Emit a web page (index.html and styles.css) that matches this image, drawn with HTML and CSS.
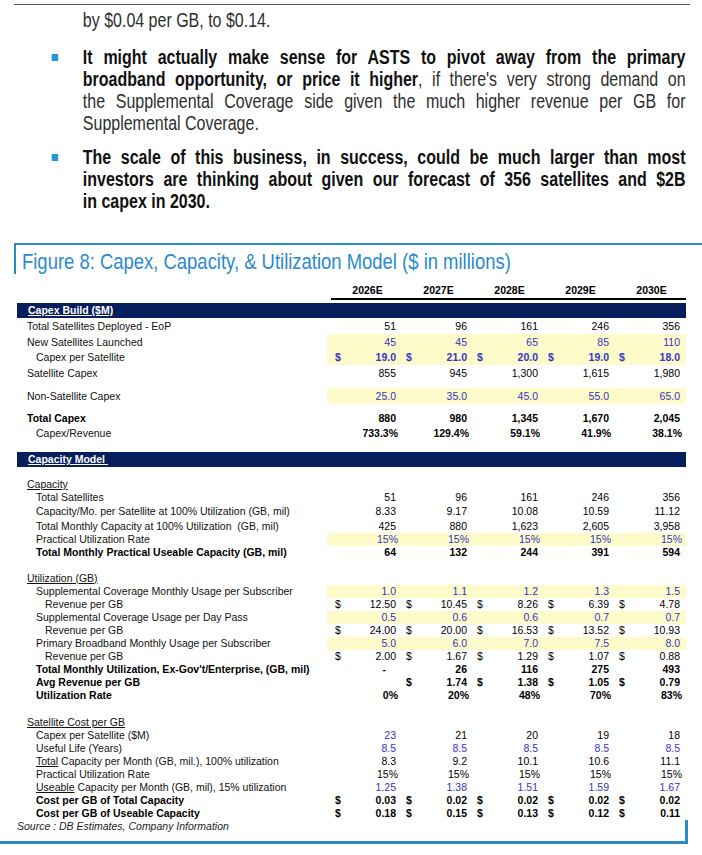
FILE: index.html
```html
<!DOCTYPE html>
<html lang="en">
<head>
<meta charset="utf-8">
<title>Figure 8: Capex, Capacity, &amp; Utilization Model</title>
<link rel="stylesheet" href="styles.css">
</head>
<body>
<div class="page">
  <div class="top-rule"></div>
  <div class="prose">
    <p class="lead">by $0.04 per GB, to $0.14.</p>
    <ul class="bullets">
      <li>
        <span class="mark"></span>
        <div>
          <span class="ln"><b>It might actually make sense for ASTS to pivot away from the primary</b></span>
          <span class="ln"><b>broadband opportunity, or price it higher</b>, if there's very strong demand on</span>
          <span class="ln">the Supplemental Coverage side given the much higher revenue per GB for</span>
          <span class="ln end">Supplemental Coverage.</span>
        </div>
      </li>
      <li>
        <span class="mark"></span>
        <div>
          <span class="ln"><b>The scale of this business, in success, could be much larger than most</b></span>
          <span class="ln"><b>investors are thinking about given our forecast of 356 satellites and $2B</b></span>
          <span class="ln end"><b>in capex in 2030.</b></span>
        </div>
      </li>
    </ul>
  </div>

  <div class="figure">
    <div class="fig-head">
      <h2 class="fig-title">Figure 8: Capex, Capacity, &amp; Utilization Model ($ in millions)</h2>
    </div>
    <div class="years"><span>2026E</span><span>2027E</span><span>2028E</span><span>2029E</span><span>2030E</span></div>

    <div class="tbl">
      <div class="bar"><u>Capex Build ($M)</u></div>

      <div class="r r16"><span class="lab">Total Satellites Deployed - EoP</span>
        <span class="vals"><span class="c">51</span><span class="c">96</span><span class="c">161</span><span class="c">246</span><span class="c">356</span></span></div>
      <div class="r r16 hl"><span class="lab">New Satellites Launched</span>
        <span class="vals blue"><span class="c">45</span><span class="c">45</span><span class="c">65</span><span class="c">85</span><span class="c">110</span></span></div>
      <div class="r r15 hl"><span class="lab in1">Capex per Satellite</span>
        <span class="vals blue b"><span class="c"><span class="d">$</span>19.0</span><span class="c"><span class="d">$</span>21.0</span><span class="c"><span class="d">$</span>20.0</span><span class="c"><span class="d">$</span>19.0</span><span class="c"><span class="d">$</span>18.0</span></span></div>
      <div class="r r16"><span class="lab">Satellite Capex</span>
        <span class="vals"><span class="c">855</span><span class="c">945</span><span class="c">1,300</span><span class="c">1,615</span><span class="c">1,980</span></span></div>
      <div class="r r16 hl gap-s"><span class="lab">Non-Satellite Capex</span>
        <span class="vals blue"><span class="c">25.0</span><span class="c">35.0</span><span class="c">45.0</span><span class="c">55.0</span><span class="c">65.0</span></span></div>
      <div class="r r15 b gap-s"><span class="lab">Total Capex</span>
        <span class="vals"><span class="c">880</span><span class="c">980</span><span class="c">1,345</span><span class="c">1,670</span><span class="c">2,045</span></span></div>
      <div class="r r14"><span class="lab in1">Capex/Revenue</span>
        <span class="vals b"><span class="c p">733.3%</span><span class="c p">129.4%</span><span class="c p">59.1%</span><span class="c p">41.9%</span><span class="c p">38.1%</span></span></div>

      <div class="bar gap-bar"><u>Capacity Model&nbsp;</u></div>

      <div class="r r14 gap-head"><span class="lab"><u>Capacity</u></span><span class="vals"></span></div>
      <div class="r"><span class="lab in1">Total Satellites</span>
        <span class="vals"><span class="c">51</span><span class="c">96</span><span class="c">161</span><span class="c">246</span><span class="c">356</span></span></div>
      <div class="r r14"><span class="lab in1">Capacity/Mo. per Satellite at 100% Utilization (GB, mil)</span>
        <span class="vals"><span class="c">8.33</span><span class="c">9.17</span><span class="c">10.08</span><span class="c">10.59</span><span class="c">11.12</span></span></div>
      <div class="r gap-xs"><span class="lab in1">Total Monthly Capacity at 100% Utilization&nbsp; (GB, mil)</span>
        <span class="vals"><span class="c">425</span><span class="c">880</span><span class="c">1,623</span><span class="c">2,605</span><span class="c">3,958</span></span></div>
      <div class="r hl"><span class="lab in1">Practical Utilization Rate</span>
        <span class="vals blue"><span class="c p">15%</span><span class="c p">15%</span><span class="c p">15%</span><span class="c p">15%</span><span class="c p">15%</span></span></div>
      <div class="r b"><span class="lab in1">Total Monthly Practical Useable Capacity (GB, mil)</span>
        <span class="vals"><span class="c">64</span><span class="c">132</span><span class="c">244</span><span class="c">391</span><span class="c">594</span></span></div>

      <div class="r gap-m"><span class="lab"><u>Utilization (GB)</u></span><span class="vals"></span></div>
      <div class="r hl"><span class="lab in1">Supplemental Coverage Monthly Usage per Subscriber</span>
        <span class="vals blue"><span class="c">1.0</span><span class="c">1.1</span><span class="c">1.2</span><span class="c">1.3</span><span class="c">1.5</span></span></div>
      <div class="r"><span class="lab in2">Revenue per GB</span>
        <span class="vals"><span class="c"><span class="d">$</span>12.50</span><span class="c"><span class="d">$</span>10.45</span><span class="c"><span class="d">$</span>8.26</span><span class="c"><span class="d">$</span>6.39</span><span class="c"><span class="d">$</span>4.78</span></span></div>
      <div class="r hl"><span class="lab in1">Supplemental Coverage Usage per Day Pass</span>
        <span class="vals blue"><span class="c">0.5</span><span class="c">0.6</span><span class="c">0.6</span><span class="c">0.7</span><span class="c">0.7</span></span></div>
      <div class="r"><span class="lab in2">Revenue per GB</span>
        <span class="vals"><span class="c"><span class="d">$</span>24.00</span><span class="c"><span class="d">$</span>20.00</span><span class="c"><span class="d">$</span>16.53</span><span class="c"><span class="d">$</span>13.52</span><span class="c"><span class="d">$</span>10.93</span></span></div>
      <div class="r hl"><span class="lab in1">Primary Broadband Monthly Usage per Subscriber</span>
        <span class="vals blue"><span class="c">5.0</span><span class="c">6.0</span><span class="c">7.0</span><span class="c">7.5</span><span class="c">8.0</span></span></div>
      <div class="r"><span class="lab in2">Revenue per GB</span>
        <span class="vals"><span class="c"><span class="d">$</span>2.00</span><span class="c"><span class="d">$</span>1.67</span><span class="c"><span class="d">$</span>1.29</span><span class="c"><span class="d">$</span>1.07</span><span class="c"><span class="d">$</span>0.88</span></span></div>
      <div class="r b"><span class="lab in1">Total Monthly Utilization, Ex-Gov't/Enterprise, (GB, mil)</span>
        <span class="vals"><span class="c dash">-</span><span class="c">26</span><span class="c">116</span><span class="c">275</span><span class="c">493</span></span></div>
      <div class="r b"><span class="lab in1">Avg Revenue per GB</span>
        <span class="vals"><span class="c"></span><span class="c"><span class="d">$</span>1.74</span><span class="c"><span class="d">$</span>1.38</span><span class="c"><span class="d">$</span>1.05</span><span class="c"><span class="d">$</span>0.79</span></span></div>
      <div class="r b"><span class="lab in1">Utilization Rate</span>
        <span class="vals"><span class="c p">0%</span><span class="c p">20%</span><span class="c p">48%</span><span class="c p">70%</span><span class="c p">83%</span></span></div>

      <div class="r gap-l"><span class="lab"><u>Satellite Cost per GB</u></span><span class="vals"></span></div>
      <div class="r"><span class="lab in1">Capex per Satellite ($M)</span>
        <span class="vals"><span class="c blue">23</span><span class="c">21</span><span class="c">20</span><span class="c">19</span><span class="c">18</span></span></div>
      <div class="r"><span class="lab in1">Useful Life (Years)</span>
        <span class="vals blue"><span class="c">8.5</span><span class="c">8.5</span><span class="c">8.5</span><span class="c">8.5</span><span class="c">8.5</span></span></div>
      <div class="r"><span class="lab in1"><u>Total</u> Capacity per Month (GB, mil.), 100% utilization</span>
        <span class="vals"><span class="c">8.3</span><span class="c">9.2</span><span class="c">10.1</span><span class="c">10.6</span><span class="c">11.1</span></span></div>
      <div class="r"><span class="lab in1">Practical Utilization Rate</span>
        <span class="vals"><span class="c p">15%</span><span class="c p">15%</span><span class="c p">15%</span><span class="c p">15%</span><span class="c p">15%</span></span></div>
      <div class="r"><span class="lab in1"><u>Useable</u> Capacity per Month (GB, mil), 15% utilization</span>
        <span class="vals blue"><span class="c">1.25</span><span class="c">1.38</span><span class="c">1.51</span><span class="c">1.59</span><span class="c">1.67</span></span></div>
      <div class="r b"><span class="lab in1">Cost per GB of Total Capacity</span>
        <span class="vals"><span class="c"><span class="d">$</span>0.03</span><span class="c"><span class="d">$</span>0.02</span><span class="c"><span class="d">$</span>0.02</span><span class="c"><span class="d">$</span>0.02</span><span class="c"><span class="d">$</span>0.02</span></span></div>
      <div class="r b"><span class="lab in1">Cost per GB of Useable Capacity</span>
        <span class="vals"><span class="c"><span class="d">$</span>0.18</span><span class="c"><span class="d">$</span>0.15</span><span class="c"><span class="d">$</span>0.13</span><span class="c"><span class="d">$</span>0.12</span><span class="c"><span class="d">$</span>0.11</span></span></div>
    </div>

    <div class="fig-foot">Source : DB Estimates, Company Information</div>
  </div>
</div>
</body>
</html>
```

FILE: styles.css
```css
* { box-sizing: border-box; }

body {
  margin: 0;
  background: #ffffff;
  font-family: "Liberation Sans", Arial, sans-serif;
  color: #000;
}

.page { width: 702px; }

.top-rule {
  margin: 4px 12px 0 14px;
  border-top: 1px solid #555;
}

/* ---------- prose: condensed face emulated by a horizontal squeeze ---------- */
.prose {
  width: 856px;                 /* 702 / 0.82 */
  transform: scaleX(0.82);
  transform-origin: 0 0;
  font-family: "Liberation Sans", Arial, sans-serif;
  font-size: 19.5px;
  line-height: 22px;
  color: #2e2e2e;
}

.lead {
  margin: 4px 0 0;
  padding-left: 101px;          /* 83px after squeeze */
}

.bullets {
  list-style: none;
  margin: 15px 0 0;
  padding: 0 20px 0 63px;       /* 52px .. 686px after squeeze */
}

.bullets li {
  display: grid;
  grid-template-columns: 38px 1fr;
}

.bullets li + li { margin-top: 12px; }

.bullets b { color: #111; }

.mark {
  width: 7.5px;
  height: 7px;
  margin-top: 8px;
  background: #2497d6;
}

.ln {
  display: block;
  white-space: nowrap;
  text-align: justify;
  text-align-last: justify;
}

.ln.end { text-align-last: left; }

/* ---------- figure ---------- */
.figure { margin-top: 31px; }

.fig-head {
  margin-left: 14px;
  border-top: 2px solid #2b8cc4;
  border-left: 2px solid #2b8cc4;
  padding: 5px 0 0 6px;
}

.fig-title {
  margin: 0;
  white-space: nowrap;
  transform: scaleX(0.82);
  transform-origin: 0 50%;
  font-weight: normal;
  font-size: 22.5px;
  line-height: 24px;
  color: #2a8ad0;
}

.years {
  display: grid;
  grid-template-columns: 67px repeat(4, 71px) 4px;
  width: 355px;
  margin: 9px 0 0 331px;
  border-bottom: 2px solid #000;
  font-size: 10.5px;
  font-weight: bold;
  line-height: 15px;
}

.years span {
  text-align: center;
  padding-left: 10px;
}

.years span:first-child { padding-left: 6px; }

.tbl {
  width: 669px;
  margin: 3px 0 0 17px;
  font-size: 10.5px;
}

.bar {
  height: 15px;
  line-height: 15px;
  padding-left: 11px;
  background: #061f5c;
  color: #fff;
  font-weight: bold;
}

.r {
  display: grid;
  grid-template-columns: 310px 1fr;
  height: 13px;
  line-height: 13px;
}

.r16 { height: 16px; line-height: 16px; }
.r15 { height: 15px; line-height: 15px; }
.r14 { height: 14px; line-height: 14px; }

.gap-xs { margin-top: 2px; }
.gap-s { margin-top: 7px; }
.gap-head { margin-top: 10px; }
.gap-bar { margin-top: 12px; }
.gap-m { margin-top: 13px; }
.gap-l { margin-top: 14px; }

.lab {
  padding-left: 10px;
  white-space: nowrap;
  color: #111;
}

.b .lab { color: #000; }

.in1 { padding-left: 19px; }
.in2 { padding-left: 28px; }

.vals {
  display: grid;
  grid-template-columns: repeat(5, 71px);
}

.hl .vals { background: #fdfbc9; }

.c {
  display: flex;
  justify-content: flex-end;
  padding: 0 2px 0 8px;
  white-space: nowrap;
}

.d { margin-right: auto; }

.p { padding-right: 0; }

.dash { padding-right: 12px; }

.blue { color: #3434c8; }

.b { font-weight: bold; }

.fig-foot {
  width: 688px;
  height: 24px;
  padding-left: 17px;
  border-right: 3px solid #2b8cc4;
  border-bottom: 3px solid #2b8cc4;
  font-size: 10.5px;
  font-style: italic;
  line-height: 12px;
  color: #222;
}
```
